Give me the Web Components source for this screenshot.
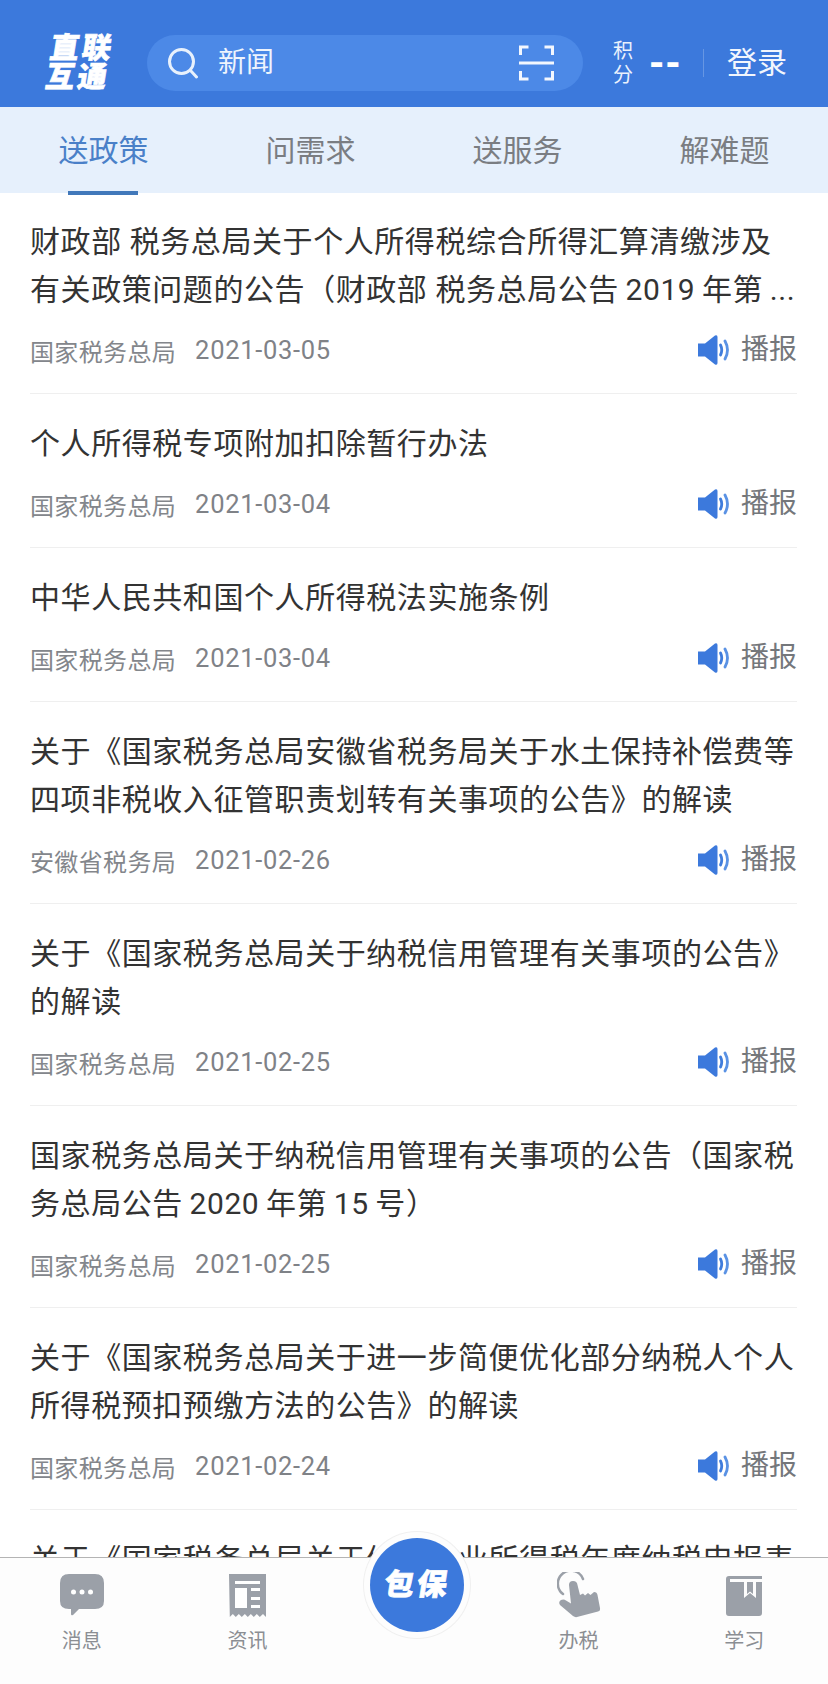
<!DOCTYPE html>
<html lang="zh"><head><meta charset="utf-8"><title>直联互通</title>
<style>
html,body{margin:0;padding:0;background:#fff}
body{font-family:Roboto,"Noto Sans CJK SC",sans-serif}
</style></head>
<body>
<app-shell>
  <top-header></top-header>
  <tab-strip></tab-strip>
  <news-list>
    <news-row source="国家税务总局" date="2021-03-05">财政部 税务总局关于个人所得税综合所得汇算清缴涉及<br>有关政策问题的公告（财政部 税务总局公告&#8201;2019&#8201;年第&#8201;...</news-row>
    <news-row source="国家税务总局" date="2021-03-04">个人所得税专项附加扣除暂行办法</news-row>
    <news-row source="国家税务总局" date="2021-03-04">中华人民共和国个人所得税法实施条例</news-row>
    <news-row source="安徽省税务局" date="2021-02-26">关于《国家税务总局安徽省税务局关于水土保持补偿费等<br>四项非税收入征管职责划转有关事项的公告》的解读</news-row>
    <news-row source="国家税务总局" date="2021-02-25">关于《国家税务总局关于纳税信用管理有关事项的公告》<br>的解读</news-row>
    <news-row source="国家税务总局" date="2021-02-25">国家税务总局关于纳税信用管理有关事项的公告（国家税<br>务总局公告&#8201;2020&#8201;年第&#8201;15&#8201;号）</news-row>
    <news-row source="国家税务总局" date="2021-02-24">关于《国家税务总局关于进一步简便优化部分纳税人个人<br>所得税预扣预缴方法的公告》的解读</news-row>
    <news-row>关于《国家税务总局关于修订企业所得税年度纳税申报表</news-row>
  </news-list>
  <bottom-bar></bottom-bar>
</app-shell>
<script>
const CJK='Roboto,"Noto Sans CJK SC",sans-serif';
function def(name,html){
  customElements.define(name,class extends HTMLElement{
    connectedCallback(){
      if(this.shadowRoot)return;
      const r=this.attachShadow({mode:'open'});
      r.innerHTML=typeof html==='function'?html(this):html;
    }
  });
}
def('app-shell',`<style>:host{display:flex;flex-direction:column;width:828px;height:1684px;overflow:hidden;position:relative;background:#fff}
</style><slot></slot>`);

def('top-header',`<style>
:host{display:flex;align-items:center;flex:none;height:107px;box-sizing:border-box;padding:19px 0 0 48px;background:#3c79dc;color:#fff;font-family:${CJK}}
.logo{flex:none;width:68px;height:58px;font-weight:900;font-size:29px;line-height:29px;letter-spacing:3px;white-space:nowrap;-webkit-text-stroke:.7px #fff;transform:skewX(-9deg)}
.pill{flex:none;display:flex;align-items:center;width:436px;height:56px;margin-left:31px;border-radius:28px;background:#4c89e7;box-sizing:border-box;padding:0 29px 0 20px}
.q{font-size:28px;margin-left:19px;flex:1;color:#eef4fd;line-height:56px}
.score{flex:none;width:20px;margin-left:30px;font-size:20px;line-height:24px;text-align:center;color:#eaf1fc}
.dd{font:900 32px/30px Inter,sans-serif;letter-spacing:1px;margin-left:16px;width:33px;flex:none}
.div{flex:none;width:1px;height:28px;background:rgba(255,255,255,.22);margin-left:21px}
.login{flex:none;font-size:30px;margin-left:23px;line-height:40px;color:#f2f6fd}
</style>
<div class="logo">直联<br>互通</div>
<div class="pill">
<svg width="32" height="32" viewBox="0 0 32 32" fill="none" stroke="#e8f1fc" stroke-width="3" stroke-linecap="round"><circle cx="14.5" cy="14.5" r="12"/><path d="M23.5 23.5 29.5 30"/></svg>
<span class="q">新闻</span>
<svg width="35" height="36" viewBox="0 0 35 36" fill="none" stroke="#f3f7fe" stroke-width="3"><path d="M1.5 10V2h8M25.500 2h8v8M1.500 26v8h8M25.500 34h8v-8"/><path d="M0 18h35" stroke-width="3"/></svg>
</div>
<div class="score">积<br>分</div>
<div class="dd">--</div>
<div class="div"></div>
<div class="login">登录</div>`);

def('tab-strip',`<style>
:host{display:grid;grid-template-columns:repeat(4,207px);flex:none;height:86px;background:#e6f0fc;font-family:${CJK}}
div{position:relative;text-align:center;font-size:30px;line-height:88px;color:#7a7d82}
.on{color:#4a80c8}
.on::after{content:"";position:absolute;left:68px;bottom:0;width:70px;height:4px;background:#4178ba}
</style>
<div class="on">送政策</div><div>问需求</div><div>送服务</div><div>解难题</div>`);

def('news-list',`<style>:host{display:block;flex:1;min-height:0;overflow:hidden;padding:0 31px 0 30px;margin-top:-1px;position:relative;z-index:0}</style><slot></slot>`);

def('news-row',el=>`<style>
:host{display:block;padding:26px 0 25px;border-bottom:1px solid #efefef;font-family:${CJK}}
.t{font-size:30px;line-height:48px;color:#333;letter-spacing:.57px;white-space:nowrap}
.m{display:flex;align-items:center;height:36px;margin-top:18px;font-size:24px;color:#83868b}
.so{letter-spacing:.35px}
.d{margin-left:19px;font-size:25.500px;letter-spacing:.7px;color:#7f8287}
.s{flex:1}
.b{font-size:28px;color:#74777b;margin-left:11px;line-height:36px}
</style>
<div class="t"><slot></slot></div>
${el.hasAttribute('source')?`<div class="m"><span class="so">${el.getAttribute('source')}</span><span class="d">${el.getAttribute('date')}</span><span class="s"></span>
<svg width="32" height="30" viewBox="0 0 32 30"><path d="M0 8.500h7L17 .5q2.500-1 2.500 1.500v26q0 2.500-2.500 1.500L7 21.500H0z" fill="#3c79dc"/><path d="M22.500 10q2.500 5 0 10" fill="none" stroke="#3f7cdc" stroke-width="2.800" stroke-linecap="round"/><path d="M27 6q5 9 0 18" fill="none" stroke="#5a92e4" stroke-width="2.800" stroke-linecap="round"/></svg>
<span class="b">播报</span></div>`:''}`);

const G='#9ba0a8';
def('bottom-bar',`<style>
:host{display:grid;grid-template-columns:repeat(5,1fr);flex:none;position:relative;z-index:1;height:127px;box-sizing:border-box;border-top:1px solid #b4b4b4;background:#fdfdfd;font-family:${CJK}}
.i{display:flex;flex-direction:column;align-items:center;padding-top:14px;margin-left:-2px}
.ic{height:46px;display:flex;align-items:center;justify-content:center}
.l{font-size:20px;line-height:28px;color:#8b8e93;margin-top:9px}
.c{position:absolute;left:364px;top:-26px;width:106px;height:106px;border-radius:50%;background:#fdfdfd;box-shadow:0 0 0 1px #f0f0f0;display:flex;align-items:center;justify-content:center}
.c b{display:flex;align-items:center;justify-content:center;width:94px;height:94px;border-radius:50%;background:#3c79dc;color:#fff}
.c span{font-size:30px;font-weight:900;letter-spacing:3px;line-height:1;-webkit-text-stroke:.7px #fff;transform:skewX(-9deg)}
</style>
<div class="i"><div class="ic"><svg width="44" height="42" viewBox="0 0 44 42"><path d="M9 0h26q9 0 9 9v18q0 8-9 8H19l-6 6q-2 1-2-1v-5H9q-9 0-9-8V9q0-9 9-9z" fill="${G}"/><circle cx="13.500" cy="18" r="2.500" fill="#fff"/><circle cx="22" cy="18" r="2.500" fill="#fff"/><circle cx="30.500" cy="18" r="2.500" fill="#fff"/></svg></div><div class="l">消息</div></div>
<div class="i"><div class="ic"><svg width="37" height="43" viewBox="0 0 37 43"><path d="M0 0h37v43l-3-3-3.200 3-3-3-3 3-3-3-3 3-3-3-3 3-3-3-3 3-3-3-3 3z" fill="${G}"/><path d="M6 7h25v3H6zM6 14h12v20H6zM22 14h9v3h-9zM22 23h9v3h-9zM22 31h9v3h-9z" fill="#fff"/></svg></div><div class="l">资讯</div></div>
<div class="i"></div>
<div class="i"><div class="ic"><svg width="44" height="46" viewBox="0 0 44 46"><path d="M6 22A13 13 0 1 1 26 7" fill="none" stroke="${G}" stroke-width="2.500" stroke-linecap="round"/><path d="M12 13q0-4 4-4t4.500 4L23 23l3-1.500 2 2 3-2.500 2.500 2 3.500-3q3 0 3.500 3l2.500 13q.5 3-2 3.500L20 45q-2 .5-4-1L3 33q-2-3 1-5 3-1 5 .5l5 3z" fill="${G}"/></svg></div><div class="l">办税</div></div>
<div class="i"><div class="ic"><svg width="36" height="41" viewBox="0 0 36 41"><path d="M0 4q0-3 3-3h33v3H4v3h32v31q0 3-3 3H3q-3 0-3-3z" fill="${G}"/><path d="M18 5.500h12V23l-6-5-6 5z" fill="#fdfdfd"/><path d="M21 7h6v12l-3-2.500-3 2.500z" fill="${G}"/></svg></div><div class="l">学习</div></div>
<div class="c"><b><span>包保</span></b></div>`);
</script>
</body></html>
